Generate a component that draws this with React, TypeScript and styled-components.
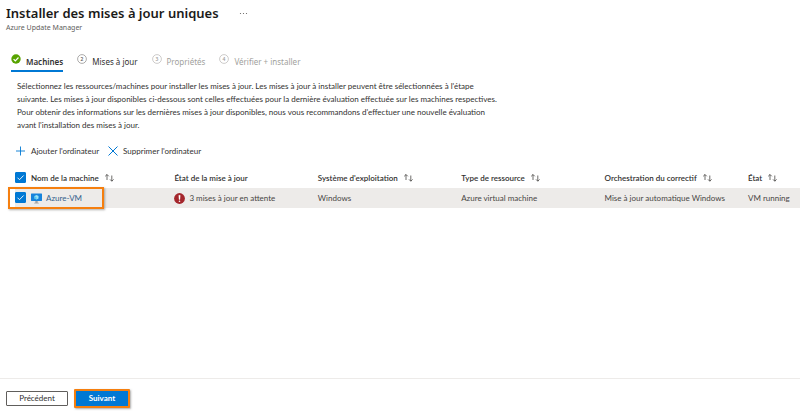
import React, { useState } from "react";
import styled, { createGlobalStyle } from "styled-components";

const GlobalStyle = createGlobalStyle`
  *, *::before, *::after { box-sizing: border-box; }
  body {
    margin: 0;
    background: #fff;
    color: #323130;
    font-family: Lato, "Noto Sans", sans-serif;
    font-size: 8px;
  }
  button { font: inherit; color: inherit; }
`;

const Page = styled.main`
  display: flex;
  flex-direction: column;
  min-height: 100vh;
`;

const Header = styled.header`
  padding: 4px 6px 0;
  font-family: "Noto Sans", "Open Sans", sans-serif;
`;

const TitleRow = styled.div`
  display: flex;
  align-items: center;
  gap: 20px;
  height: 19px;
`;

const Title = styled.h1`
  margin: 0;
  font-size: 13px;
  line-height: 19px;
  font-weight: 600;
  color: #1b1a19;
  white-space: nowrap;
`;

const MoreButton = styled.button`
  display: flex;
  padding: 0;
  border: 0;
  background: none;
  color: #605e5c;
`;

const Subtitle = styled.p`
  margin: 0;
  font-size: 7px;
  line-height: 10px;
  color: #605e5c;
`;

const Steps = styled.nav`
  display: flex;
  gap: 14px;
  padding: 19px 11px 0;
  font-family: "Noto Sans", "Open Sans", sans-serif;
`;

const Step = styled.button<{ $active?: boolean }>`
  display: flex;
  align-items: center;
  gap: 5px;
  height: 20px;
  padding: 0;
  border: 0;
  border-bottom: 2px solid ${(p) => (p.$active ? "#0078d4" : "transparent")};
  background: none;
  font-weight: ${(p) => (p.$active ? 600 : 400)};
  white-space: nowrap;
  &:disabled { color: #a19f9d; }
  svg { margin-bottom: 4px; }
`;

const Intro = styled.p`
  margin: 8px 0 0 17px;
  line-height: 13px;
`;

const Toolbar = styled.div`
  display: flex;
  gap: 9px;
  padding: 11px 15px 0;
`;

const ToolButton = styled.button`
  display: flex;
  align-items: center;
  gap: 5px;
  height: 16px;
  padding: 0;
  border: 0;
  background: none;
  white-space: nowrap;
`;

const TableArea = styled.div`
  padding: 8px 0 0 15px;
`;

const Table = styled.table`
  width: 100%;
  table-layout: fixed;
  border-collapse: collapse;
  text-align: left;
`;

const CheckCol = styled.col`
  width: 16px;
`;

const StateCol = styled.col`
  width: 52px;
`;

const HeadCell = styled.th`
  height: 21px;
  padding: 0;
  font-weight: 600;
  white-space: nowrap;
`;

const Cell = styled.td`
  height: 20px;
  padding: 0;
  background: #edebe9;
  color: #484644;
  white-space: nowrap;
`;

const CellContent = styled.span<{ $gap?: number }>`
  display: flex;
  align-items: center;
  gap: ${(p) => p.$gap ?? 5}px;
`;

const SortButton = styled.button`
  display: flex;
  padding: 0;
  border: 0;
  background: none;
`;

const SelectedMark = styled.span`
  position: relative;
  display: block;
  height: 12px;
  &::after {
    content: "";
    position: absolute;
    top: -5px;
    left: -7px;
    width: 96px;
    height: 22px;
    border: 2px solid #f57f0f;
    box-shadow: 1px 1px 2px #605e5c80;
    pointer-events: none;
  }
`;

const CheckBox = styled.input`
  appearance: none;
  display: block;
  width: 11px;
  height: 11px;
  margin: 0;
  border: 1px solid #0078d4;
  border-radius: 1px;
  background: #fff;
  &:checked {
    background: #0078d4
      url("data:image/svg+xml,%3Csvg xmlns='http://www.w3.org/2000/svg' viewBox='0 0 9 9'%3E%3Cpath d='M1.5 4.7 3.5 6.7 7.6 2.5' fill='none' stroke='white' stroke-width='.9'/%3E%3C/svg%3E");
  }
`;

const MachineLink = styled.a`
  color: #325f8c;
  text-decoration: none;
`;

const Footer = styled.footer`
  display: flex;
  gap: 6px;
  margin-top: auto;
  padding: 10px 6px 7px;
  border-top: 1px solid #edebe9;
`;

const FooterButton = styled.button<{ $primary?: boolean }>`
  min-width: ${(p) => (p.$primary ? 56 : 62)}px;
  height: ${(p) => (p.$primary ? 19 : 15)}px;
  margin: ${(p) => (p.$primary ? "0" : "2px 0")};
  padding: 0;
  border: ${(p) => (p.$primary ? "2px solid #f57f0f" : "1px solid #605e5c")};
  border-radius: 1px;
  background: ${(p) => (p.$primary ? "#0078d4" : "#fff")};
  color: ${(p) => (p.$primary ? "#fff" : "#323130")};
  box-shadow: ${(p) => (p.$primary ? "1px 1px 2px #605e5c80" : "none")};
  font-weight: ${(p) => (p.$primary ? 700 : 400)};
  line-height: 11px;
`;

const DoneIcon = () => (
  <svg width="10" height="10" viewBox="0 0 10 10" aria-hidden="true">
    <circle cx="5" cy="5" r="4.7" fill="#57a300" />
    <path d="M2.6 5.1 4.3 6.8 7.5 3.5" fill="none" stroke="#fff" strokeWidth="1.2" />
  </svg>
);

const StepNumber = ({ n, muted }: { n: number; muted?: boolean }) => (
  <svg width="10" height="10" viewBox="0 0 10 10" aria-hidden="true">
    <circle cx="5" cy="5" r="4.4" fill="none" stroke={muted ? "#b8b6b4" : "#8a8886"} strokeWidth=".7" />
    <text x="5" y="6.8" textAnchor="middle" fontSize="5" fontWeight="600" fill={muted ? "#a19f9d" : "#605e5c"}>
      {n}
    </text>
  </svg>
);

const PlusIcon = () => (
  <svg width="11" height="10" viewBox="0 0 11 10" aria-hidden="true">
    <path d="M1 5h9M5.5.5v9" stroke="#0078d4" strokeWidth=".9" />
  </svg>
);

const CrossIcon = () => (
  <svg width="10" height="10" viewBox="0 0 10 10" aria-hidden="true">
    <path d="M.5.5l9 9M9.5.5l-9 9" stroke="#0078d4" strokeWidth="1" />
  </svg>
);

const SortIcon = () => (
  <svg width="11" height="9" viewBox="0 0 11 9" fill="none" stroke="#484644" strokeWidth=".8" aria-hidden="true">
    <path d="M3 7V1.5M1.2 3.3 3 1.5l1.8 1.8M7.8 2.5v5.7M6 6.4l1.8 1.8 1.8-1.8" />
  </svg>
);

const VmIcon = () => (
  <svg width="11" height="11" viewBox="0 0 11 11" aria-hidden="true">
    <rect width="11" height="7.5" y=".5" rx=".4" fill="#1683dc" />
    <path d="M5.5 2 7.5 3.1v2.3L5.5 6.5l-2-1.1V3.1z" fill="#9be3f7" />
    <path d="M5.5 4.3v2.2l-2-1.1V3.1z" fill="#50c8ef" />
    <path d="M4.3 8h2.4v1.7h1.1v.8H3.2v-.8h1.1z" fill="#a3a3a3" />
  </svg>
);

const AlertIcon = () => (
  <svg width="11" height="11" viewBox="0 0 11 11" aria-hidden="true">
    <circle cx="5.5" cy="5.5" r="5.4" fill="#a4262c" />
    <path d="M4.8 2.3h1.4L6 6.5H5z" fill="#fff" stroke="#fff" strokeWidth=".3" />
    <circle cx="5.5" cy="8.2" r=".8" fill="#fff" />
  </svg>
);

const columns = [
  { label: "Nom de la machine", sortable: true },
  { label: "État de la mise à jour", sortable: false },
  { label: "Système d'exploitation", sortable: true },
  { label: "Type de ressource", sortable: true },
  { label: "Orchestration du correctif", sortable: true },
  { label: "État", sortable: true },
];

export default function App() {
  const [selected, setSelected] = useState(true);
  const toggle = () => setSelected((value) => !value);

  return (
    <Page>
      <GlobalStyle />
      <Header>
        <TitleRow>
          <Title>Installer des mises à jour uniques</Title>
          <MoreButton aria-label="Plus d'options">
            <svg width="9" height="3" viewBox="0 0 9 3" fill="currentColor" aria-hidden="true">
              <circle cx="1.5" cy="1.5" r=".6" />
              <circle cx="4.5" cy="1.5" r=".6" />
              <circle cx="7.5" cy="1.5" r=".6" />
            </svg>
          </MoreButton>
        </TitleRow>
        <Subtitle>Azure Update Manager</Subtitle>
      </Header>

      <Steps aria-label="Étapes">
        <Step $active aria-current="step"><DoneIcon />Machines</Step>
        <Step><StepNumber n={2} />Mises à jour</Step>
        <Step disabled><StepNumber n={3} muted />Propriétés</Step>
        <Step disabled><StepNumber n={4} muted />Vérifier + installer</Step>
      </Steps>

      <Intro>
        Sélectionnez les ressources/machines pour installer les mises à jour. Les mises à jour à installer peuvent être sélectionnées à l'étape<br />
        suivante. Les mises à jour disponibles ci-dessous sont celles effectuées pour la dernière évaluation effectuée sur les machines respectives.<br />
        Pour obtenir des informations sur les dernières mises à jour disponibles, nous vous recommandons d'effectuer une nouvelle évaluation<br />
        avant l'installation des mises à jour.
      </Intro>

      <Toolbar>
        <ToolButton><PlusIcon />Ajouter l'ordinateur</ToolButton>
        <ToolButton><CrossIcon />Supprimer l'ordinateur</ToolButton>
      </Toolbar>

      <TableArea>
        <Table>
          <colgroup>
            <CheckCol />
            <col /><col /><col /><col /><col />
            <StateCol />
          </colgroup>
          <thead>
            <tr>
              <HeadCell>
                <CheckBox type="checkbox" aria-label="Tout sélectionner" checked={selected} onChange={toggle} />
              </HeadCell>
              {columns.map((column) => (
                <HeadCell key={column.label} scope="col">
                  <CellContent>
                    {column.label}
                    {column.sortable && (
                      <SortButton aria-label={`Trier par ${column.label}`}><SortIcon /></SortButton>
                    )}
                  </CellContent>
                </HeadCell>
              ))}
            </tr>
          </thead>
          <tbody>
            <tr>
              <Cell>
                <SelectedMark>
                  <CheckBox type="checkbox" aria-label="Sélectionner Azure-VM" checked={selected} onChange={toggle} />
                </SelectedMark>
              </Cell>
              <Cell>
                <CellContent $gap={4}><VmIcon /><MachineLink href="#azure-vm">Azure-VM</MachineLink></CellContent>
              </Cell>
              <Cell><CellContent $gap={4}><AlertIcon />3 mises à jour en attente</CellContent></Cell>
              <Cell>Windows</Cell>
              <Cell>Azure virtual machine</Cell>
              <Cell>Mise à jour automatique Windows</Cell>
              <Cell>VM running</Cell>
            </tr>
          </tbody>
        </Table>
      </TableArea>

      <Footer>
        <FooterButton>Précédent</FooterButton>
        <FooterButton $primary>Suivant</FooterButton>
      </Footer>
    </Page>
  );
}
